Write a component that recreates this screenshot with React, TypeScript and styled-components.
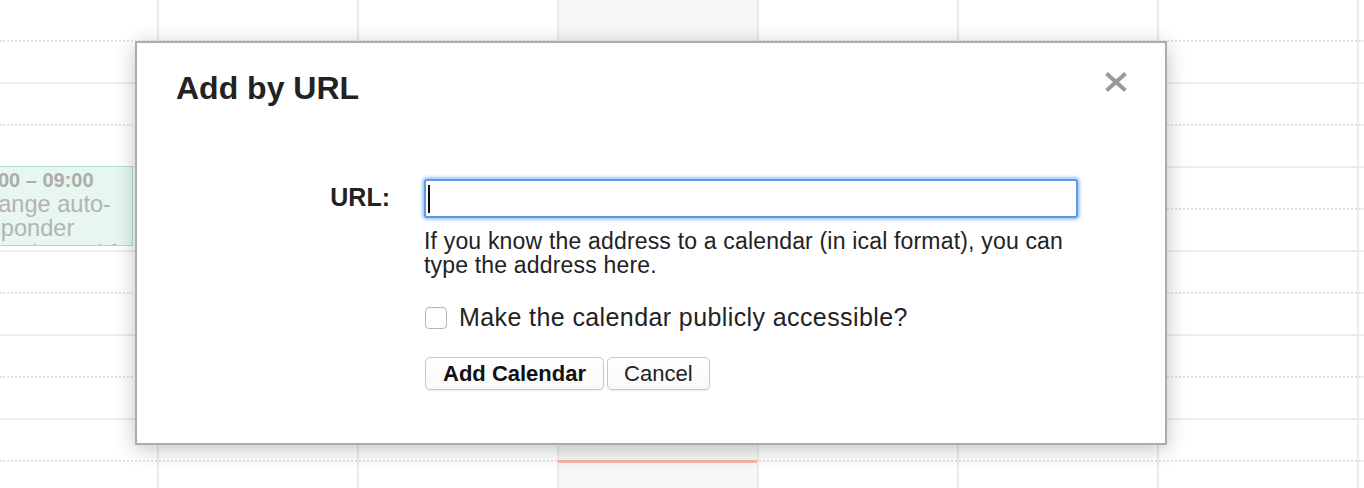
import React from "react";
import styled, { createGlobalStyle } from "styled-components";

const GlobalStyle = createGlobalStyle`
  html, body {
    margin: 0;
    padding: 0;
    background: #fff;
    overflow: hidden;
  }
  body {
    font-family: "Liberation Sans", Arial, Helvetica, sans-serif;
    color: #222;
  }
  *, *::before, *::after { box-sizing: border-box; }
`;

const Page = styled.div`
  position: relative;
  width: 1364px;
  height: 488px;
  overflow: hidden;
`;

const Calendar = styled.div`
  display: flex;
  height: 100%;
`;

const DayColumn = styled.div<{ $width?: number; $today?: boolean; $first?: boolean }>`
  position: relative;
  flex: ${(p) => (p.$width ? `0 0 ${p.$width}px` : "1 1 auto")};
  border-left: ${(p) => (p.$first ? "none" : "2px solid #ebebeb")};
  background: ${(p) => (p.$today ? "#f7f7f7" : "#fff")};
  display: flex;
  flex-direction: column;
`;

const Slot = styled.div<{ $half: boolean }>`
  flex: 0 0 42px;
  border-bottom: 2px ${(p) => (p.$half ? "dotted #e3e3e3" : "solid #ececec")};
`;

const NowLine = styled.div`
  position: absolute;
  left: -1px;
  right: 0;
  top: 460px;
  height: 3px;
  background: #f6b3a9;
`;

const EventCard = styled.div`
  position: absolute;
  top: 166px;
  left: -37px;
  width: 170px;
  height: 80px;
  padding: 3px 4px;
  background: #e7f6ef;
  border: 1px solid #abe2c9;
  overflow: hidden;
  color: #b3b3b3;
`;

const EventTime = styled.div`
  font-weight: bold;
  font-size: 20px;
  line-height: 20px;
  white-space: nowrap;
  color: #adadad;
  margin-left: 1px;
`;

const EventLine = styled.div<{ $tail?: boolean }>`
  font-size: 23.6px;
  line-height: 24px;
  white-space: nowrap;
  position: relative;
  top: ${(p) => (p.$tail ? "3px" : "2px")};
`;

const Dialog = styled.div`
  position: absolute;
  left: 135px;
  top: 41px;
  width: 1032px;
  height: 404px;
  background: #fff;
  border: 2px solid #acacac;
  box-shadow: 0 4px 20px rgba(0, 0, 0, 0.24);
  padding: 27px 38px 0 39px;
`;

const Header = styled.div`
  display: flex;
  justify-content: space-between;
  align-items: flex-start;
  height: 36px;
`;

const Title = styled.h2`
  margin: 0;
  font-size: 32px;
  font-weight: bold;
  line-height: 36px;
  color: #222;
`;

const CloseButton = styled.button`
  margin: 1px -1px 0 0;
  padding: 0;
  border: 0;
  background: none;
  width: 24px;
  height: 22px;
  cursor: pointer;
  display: flex;
`;

const Form = styled.div`
  display: grid;
  grid-template-columns: 214px 654px;
  column-gap: 34px;
  margin-top: 73px;
`;

const FieldLabel = styled.label`
  align-self: start;
  text-align: right;
  font-size: 25px;
  font-weight: bold;
  line-height: 36px;
  white-space: nowrap;
  color: #222;
`;

const InputFrame = styled.div`
  height: 39px;
  display: flex;
  align-items: center;
  border: 2px solid #5b9be6;
  border-radius: 3px;
  box-shadow: 0 0 3px 2px rgba(105, 165, 245, 0.6);
  background: #fff;
  padding: 0 2px;
`;

const Caret = styled.span`
  flex: none;
  width: 2px;
  height: 28px;
  background: #111;
`;

const UrlInput = styled.input`
  flex: 1;
  min-width: 0;
  height: 100%;
  border: 0;
  outline: none;
  background: transparent;
  font: inherit;
  font-size: 22px;
  padding: 0 2px;
`;

const Help = styled.p`
  grid-column: 2;
  margin: 11px 0 0;
  font-size: 23px;
  line-height: 24px;
  letter-spacing: 0.18px;
  color: #222;
`;

const CheckRow = styled.label`
  grid-column: 2;
  margin-top: 25px;
  height: 30px;
  display: flex;
  align-items: center;
  gap: 12px;
  cursor: pointer;
`;

const Checkbox = styled.input`
  appearance: none;
  margin: 2px 0 0 1px;
  width: 22px;
  height: 22px;
  border: 1px solid #b7b7b7;
  border-radius: 4px;
  background: #fff;
  box-shadow: inset 0 1px 1px rgba(0, 0, 0, 0.04);
`;

const CheckText = styled.span`
  font-size: 25px;
  line-height: 30px;
  letter-spacing: 0.4px;
  color: #222;
  white-space: nowrap;
`;

const Actions = styled.div`
  grid-column: 2;
  margin-top: 25px;
  display: flex;
  gap: 3px;
`;

const Button = styled.button<{ $primary?: boolean }>`
  height: 33px;
  padding: 0 ${(p) => (p.$primary ? "17px" : "16px")};
  margin-left: ${(p) => (p.$primary ? "1px" : "0")};
  font-family: inherit;
  font-size: 22px;
  line-height: 31px;
  font-weight: ${(p) => (p.$primary ? "bold" : "normal")};
  color: ${(p) => (p.$primary ? "#111" : "#222")};
  background: linear-gradient(#ffffff, #f9f9f9);
  border: 1px solid #c8c8c8;
  border-radius: 5px;
  box-shadow: 0 1px 1px rgba(0, 0, 0, 0.08);
  cursor: pointer;
`;

const columns = [
  { width: 157, first: true },
  { width: 200 },
  { width: 200 },
  { width: 200, today: true },
  { width: 200 },
  { width: 200 },
  { width: 200 },
  {},
];

const slots = Array.from({ length: 12 }, (_, i) => i);

export default function App() {
  return (
    <>
      <GlobalStyle />
      <Page>
        <Calendar>
          {columns.map((c, ci) => (
            <DayColumn key={ci} $width={c.width} $today={c.today} $first={c.first}>
              {slots.map((s) => (
                <Slot key={s} $half={s % 2 === 0} />
              ))}
              {ci === 0 && (
                <EventCard>
                  <EventTime>08:00 – 09:00</EventTime>
                  <EventLine>Change auto-</EventLine>
                  <EventLine>responder</EventLine>
                  <EventLine $tail>mens jeg er i ferie</EventLine>
                </EventCard>
              )}
              {c.today && <NowLine />}
            </DayColumn>
          ))}
        </Calendar>

        <Dialog role="dialog" aria-label="Add by URL">
          <Header>
            <Title>Add by URL</Title>
            <CloseButton aria-label="Close">
              <svg width="24" height="22" viewBox="0 0 24 22">
                <path d="M2.5 2.5 L21.5 19.5 M21.5 2.5 L2.5 19.5" stroke="#9a9a9a" strokeWidth="4" fill="none" />
              </svg>
            </CloseButton>
          </Header>
          <Form>
            <FieldLabel htmlFor="url">URL:</FieldLabel>
            <InputFrame>
              <Caret />
              <UrlInput id="url" type="text" />
            </InputFrame>
            <Help>
              If you know the address to a calendar (in ical format), you can type the address here.
            </Help>
            <CheckRow>
              <Checkbox type="checkbox" />
              <CheckText>Make the calendar publicly accessible?</CheckText>
            </CheckRow>
            <Actions>
              <Button $primary>Add Calendar</Button>
              <Button>Cancel</Button>
            </Actions>
          </Form>
        </Dialog>
      </Page>
    </>
  );
}
